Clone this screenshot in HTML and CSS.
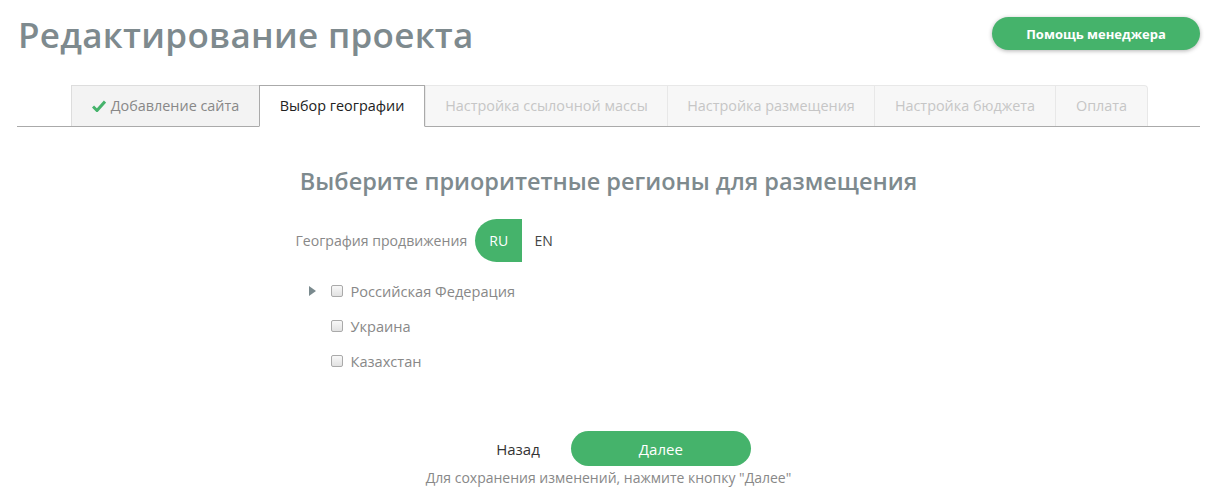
FILE: index.html
```html
<!DOCTYPE html>
<html lang="ru">
<head>
<meta charset="utf-8">
<title>Редактирование проекта</title>
<link rel="stylesheet" href="styles.css">
</head>
<body>
<div class="page">
  <header class="top">
    <h1 class="title">Редактирование проекта</h1>
    <button class="help-btn">Помощь менеджера</button>
  </header>

  <nav class="tabs">
    <div class="tab done w1"><svg class="check" viewBox="0 0 14 12" width="14" height="12"><path d="M1 6.5 L5 10.5 L13 1.5" fill="none" stroke="#45b36b" stroke-width="3"/></svg>Добавление сайта</div>
    <div class="tab active w2">Выбор географии</div>
    <div class="tab w3">Настройка ссылочной массы</div>
    <div class="tab w4">Настройка размещения</div>
    <div class="tab w5">Настройка бюджета</div>
    <div class="tab w6 last">Оплата</div>
  </nav>

  <main class="content">
    <h2 class="subtitle">Выберите приоритетные регионы для размещения</h2>

    <div class="geo">
      <div class="geo-row">
        <span class="geo-label">География продвижения</span>
        <div class="lang">
          <span class="lang-opt on">RU</span>
          <span class="lang-opt">EN</span>
        </div>
      </div>

      <ul class="tree">
        <li class="node"><span class="caret"></span><span class="cb"></span><span class="node-text">Российская Федерация</span></li>
        <li class="node"><span class="caret empty"></span><span class="cb"></span><span class="node-text">Украина</span></li>
        <li class="node"><span class="caret empty"></span><span class="cb"></span><span class="node-text">Казахстан</span></li>
      </ul>
    </div>

    <div class="actions">
      <a class="back">Назад</a>
      <button class="next">Далее</button>
    </div>
    <p class="note">Для сохранения изменений, нажмите кнопку "Далее"</p>
  </main>
</div>
</body>
</html>
```

FILE: styles.css
```css
* { box-sizing: border-box; }
html, body { margin: 0; padding: 0; background: #fff; }
body {
  font-family: "Open Sans", "Noto Sans", sans-serif;
  color: #333;
}
.page { padding: 0 15px 0 17px; }

.top {
  display: flex;
  justify-content: space-between;
  align-items: flex-start;
  height: 85px;
}
.title {
  margin: 12px 0 0 1px;
  font-size: 35px;
  font-weight: 600;
  color: #7e8a8e;
  letter-spacing: 0.3px;
  line-height: 46px;
}
.help-btn {
  margin-top: 17px;
  width: 208px;
  height: 33px;
  border: none;
  border-radius: 17px;
  background: #45b36b;
  color: #fff;
  font-family: inherit;
  font-weight: 700;
  font-size: 13px;
  box-shadow: 0 1px 4px rgba(0,0,0,0.3);
}

.tabs {
  display: flex;
  padding-left: 54px;
  border-bottom: 1px solid #aaa;
}
.tab {
  height: 41px;
  border: 1px solid #e8e8e8;
  border-bottom: none;
  border-right: none;
  background: #f7f7f7;
  color: #c6c6c6;
  font-size: 14.4px;
  display: flex;
  align-items: center;
  justify-content: center;
  padding-bottom: 1px;
}
.tab.last { border-right: 1px solid #e8e8e8; border-top-right-radius: 4px; }
.tab.done { color: #888; background: #f3f3f3; border-color: #ddd; }
.tab.active {
  background: #fff;
  color: #222;
  border: 1px solid #aaa;
  border-bottom: 1px solid #fff;
  height: 42px;
  margin-bottom: -1px;
}
.check { margin-right: 5px; }
.w1 { width: 188px; }
.w2 { width: 166px; }
.w3 { width: 242px; }
.w4 { width: 207px; }
.w5 { width: 181px; }
.w6 { width: 93px; }

.content { display: flex; flex-direction: column; align-items: center; }
.subtitle {
  margin: 39px 0 0 0;
  font-size: 23.5px;
  font-weight: 600;
  color: #7e8a8e;
  line-height: 30px;
}

.geo { width: 640px; padding-left: 7px; margin-top: 23px; }
.geo-row { display: flex; align-items: center; height: 43px; }
.geo-label { font-size: 14.1px; color: #888; margin-right: 8px; }
.lang { display: flex; align-items: center; height: 43px; }
.lang-opt { font-size: 14px; color: #444; width: 43px; text-align: center; line-height: 43px; }
.lang-opt.on {
  width: 47px;
  background: #45b36b;
  color: #fff;
  border-radius: 22px 0 0 22px;
}

.tree { list-style: none; margin: 11px 0 0 0; padding: 0 0 0 13px; }
.node { display: flex; align-items: center; height: 35px; }
.caret {
  width: 0; height: 0;
  border-left: 7px solid #7a8a8e;
  border-top: 5px solid transparent;
  border-bottom: 5px solid transparent;
  margin-right: 15px;
}
.caret.empty { border-left-color: transparent; }
.node .cb {
  width: 12px; height: 12px;
  border: 1px solid #aaa;
  border-radius: 2px;
  background: linear-gradient(#f8f8f8, #e2e2e2);
  margin-right: 8px;
}
.node-text { font-size: 14.6px; color: #888; }

.actions { display: flex; align-items: center; margin-top: 53px; margin-left: 30px; }
.back { font-size: 15px; color: #333; margin-right: 31px; }
.next {
  width: 180px; height: 35px;
  border: none; border-radius: 18px;
  background: #45b36b;
  color: #fff;
  font-family: inherit;
  font-size: 15px;
}
.note { margin: 2px 0 0 0; font-size: 14px; color: #888; }
```
